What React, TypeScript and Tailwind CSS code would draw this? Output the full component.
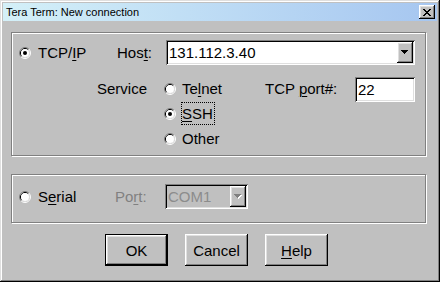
import React from "react";

const RAISED =
  "shadow-[inset_-1px_-1px_#000,inset_1px_1px_#fff,inset_-2px_-2px_#808080,inset_2px_2px_#dfdfdf]";
const SUNKEN =
  "shadow-[inset_1px_1px_#808080,inset_-1px_-1px_#fff,inset_2px_2px_#000,inset_-2px_-2px_#dfdfdf]";

function Radio({ checked }: { checked?: boolean }) {
  return (
    <svg width="12" height="12" viewBox="0 0 12 12" className="shrink-0 block">
      <path d="M2.11 9.89 A5.5 5.5 0 0 1 9.89 2.11" fill="none" stroke="#808080" strokeWidth="1" />
      <path d="M9.89 2.11 A5.5 5.5 0 0 1 2.11 9.89" fill="none" stroke="#ffffff" strokeWidth="1" />
      <path d="M2.82 9.18 A4.5 4.5 0 0 1 9.18 2.82" fill="none" stroke="#000000" strokeWidth="1" />
      <path d="M9.18 2.82 A4.5 4.5 0 0 1 2.82 9.18" fill="none" stroke="#dfdfdf" strokeWidth="1" />
      <circle cx="6" cy="6" r="4" fill="#ffffff" />
      {checked && <circle cx="6" cy="6" r="2" fill="#000000" />}
    </svg>
  );
}

function Arrow({ disabled }: { disabled?: boolean }) {
  const c = disabled ? "#808080" : "#000000";
  return (
    <svg width="8" height="5" viewBox="0 0 8 5" className="block">
      {disabled && (
        <g fill="#ffffff">
          <rect x="1" y="1" width="7" height="1" />
          <rect x="2" y="2" width="5" height="1" />
          <rect x="3" y="3" width="3" height="1" />
          <rect x="4" y="4" width="1" height="1" />
        </g>
      )}
      <g fill={c}>
        <rect x="0" y="0" width="7" height="1" />
        <rect x="1" y="1" width="5" height="1" />
        <rect x="2" y="2" width="3" height="1" />
        <rect x="3" y="3" width="1" height="1" />
      </g>
    </svg>
  );
}

function CloseX() {
  const rows = ["11000011", "01100110", "00111100", "00011000", "00111100", "01100110", "11000011"];
  const rects: React.ReactElement[] = [];
  rows.forEach((r, y) =>
    r.split("").forEach((ch, x) => {
      if (ch === "1") rects.push(<rect key={`${x}-${y}`} x={x} y={y} width="1" height="1" />);
    })
  );
  return (
    <svg width="8" height="7" viewBox="0 0 8 7" fill="#000" className="block" shapeRendering="crispEdges">
      {rects}
    </svg>
  );
}

function U({ children }: { children: React.ReactNode }) {
  return <span className="underline underline-offset-[2px] decoration-1">{children}</span>;
}

export default function App() {
  return (
    <div className="w-[440px] h-[282px] bg-[#c0c0c0] shadow-[inset_-1px_-1px_#000,inset_1px_1px_#dfdfdf,inset_-2px_-2px_#808080,inset_2px_2px_#fff] flex flex-col font-['Liberation_Sans',Arial,sans-serif] text-[15px] text-black leading-none">
      {/* Title bar */}
      <div className="mx-[3px] mt-[3px] h-[18px] flex items-center bg-gradient-to-r from-[#d4f0f8] to-[#a6c6f0] pl-[3px] pr-[2px]">
        <span className="text-[11px] text-black">Tera Term: New connection</span>
        <div className={`ml-auto w-[16px] h-[14px] bg-[#c0c0c0] flex items-center justify-center ${RAISED}`}>
          <CloseX />
        </div>
      </div>

      {/* TCP/IP group */}
      <div className="mt-[11px] ml-[11px] w-[415px] h-[124px] border border-[#808080] shadow-[inset_1px_1px_#fff,1px_1px_#fff] flex flex-col">
        <div className="mt-[7px] h-[25px] flex items-center pl-[7px]">
          <Radio checked />
          <span className="ml-[7px] w-[79px]">
            TCP/<U>I</U>P
          </span>
          <span className="w-[49px]">
            Hos<U>t</U>:
          </span>
          <div className={`w-[249px] h-[25px] bg-white flex items-center pl-[3px] pr-[2px] ${SUNKEN}`}>
            <span className="flex-1">131.112.3.40</span>
            <div className={`w-[16px] h-[21px] bg-[#c0c0c0] flex items-center justify-center ${RAISED}`}>
              <Arrow />
            </div>
          </div>
        </div>

        <div className="mt-[11px] h-[25px] flex items-center pl-[85px]">
          <span className="w-[67px]">Service</span>
          <Radio />
          <span className="ml-[6px] w-[83px]">
            Te<U>l</U>net
          </span>
          <span className="w-[90px]">
            TCP <U>p</U>ort#:
          </span>
          <div className={`w-[60px] h-[25px] bg-white flex items-center pl-[3px] self-start mt-[1px] ${SUNKEN}`}>
            22
          </div>
        </div>

        <div className="h-[25px] flex items-center pl-[152px]">
          <Radio checked />
          <span className="ml-[5px] h-[23px] px-[0px] border border-dotted border-black flex items-center pr-[1px]">
            <U>S</U>SH
          </span>
        </div>

        <div className="h-[25px] flex items-center pl-[152px]">
          <Radio />
          <span className="ml-[6px]">Other</span>
        </div>
      </div>

      {/* Serial group */}
      <div className="mt-[18px] ml-[11px] w-[415px] h-[49px] border border-[#808080] shadow-[inset_1px_1px_#fff,1px_1px_#fff] flex flex-col">
        <div className="mt-[9px] h-[25px] flex items-center pl-[7px]">
          <Radio />
          <span className="ml-[7px] w-[77px]">
            S<U>e</U>rial
          </span>
          <span className="w-[50px] text-[#808080]">
            Po<U>r</U>t:
          </span>
          <div className={`w-[83px] h-[25px] bg-[#c0c0c0] flex items-center pl-[3px] pr-[2px] ${SUNKEN}`}>
            <span className="flex-1 text-[#8c8c8c]">COM1</span>
            <div className={`w-[16px] h-[21px] bg-[#c0c0c0] flex items-center justify-center ${RAISED}`}>
              <Arrow disabled />
            </div>
          </div>
        </div>
      </div>

      {/* Buttons */}
      <div className="mt-[11px] ml-[105px] flex gap-[17px]">
        <div className="w-[63px] h-[32px] border border-black">
          <div className={`w-full h-full flex items-center justify-center ${RAISED}`}>OK</div>
        </div>
        <div className={`w-[63px] h-[32px] flex items-center justify-center ${RAISED}`}>Cancel</div>
        <div className={`w-[63px] h-[32px] flex items-center justify-center ${RAISED}`}>
          <span>
            <U>H</U>elp
          </span>
        </div>
      </div>
    </div>
  );
}
